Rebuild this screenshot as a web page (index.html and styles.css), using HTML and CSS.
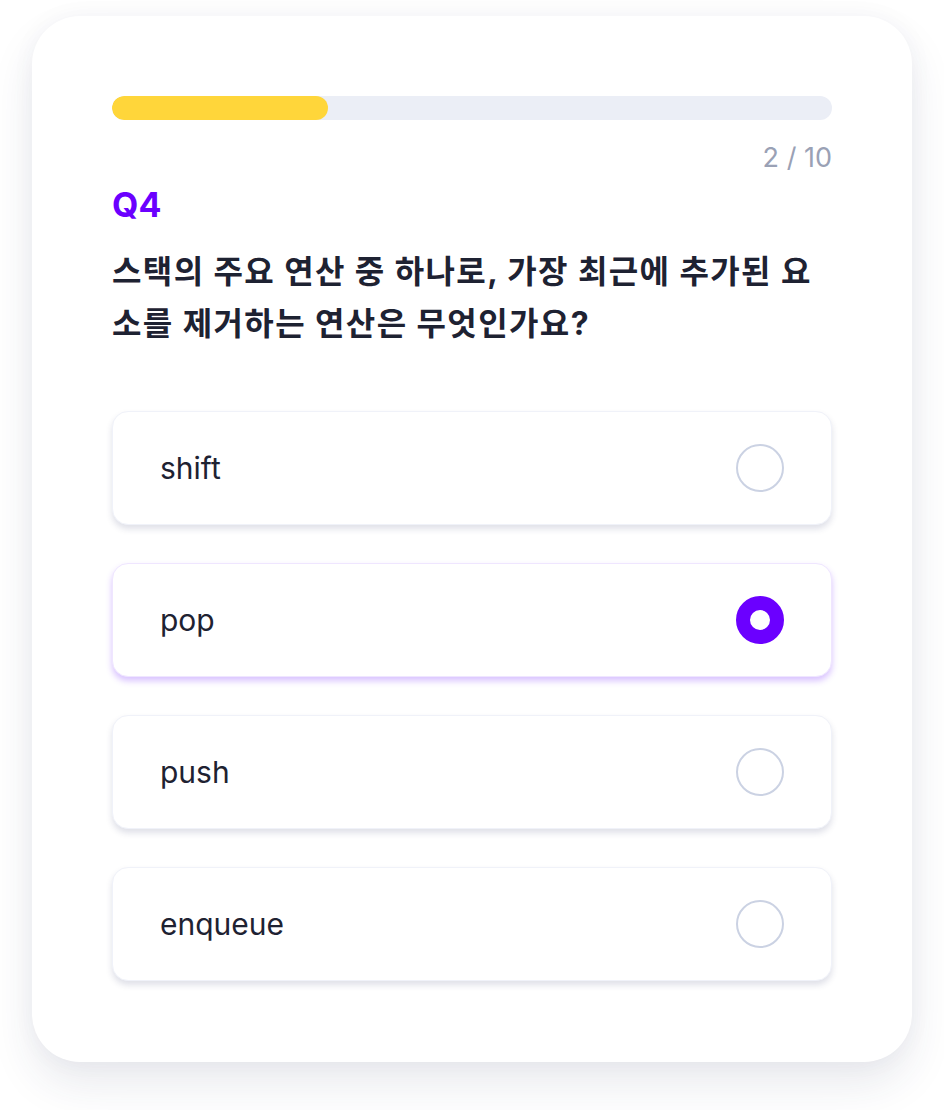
FILE: index.html
```html
<!DOCTYPE html>
<html lang="ko">
<head>
<meta charset="utf-8">
<title>Quiz</title>
<link rel="stylesheet" href="styles.css">
</head>
<body>
<main class="quiz-card">
  <div class="progress"><div class="progress-fill" style="width:30%"></div></div>
  <div class="counter">2 / 10</div>
  <h2 class="q-label">Q4</h2>
  <p class="question">스택의 주요 연산 중 하나로, 가장 최근에 추가된 요소를 제거하는 연산은 무엇인가요?</p>
  <ul class="options">
    <li class="option"><span class="option-text">shift</span><span class="radio"></span></li>
    <li class="option selected"><span class="option-text">pop</span><span class="radio"></span></li>
    <li class="option"><span class="option-text">push</span><span class="radio"></span></li>
    <li class="option"><span class="option-text">enqueue</span><span class="radio"></span></li>
  </ul>
</main>
</body>
</html>
```

FILE: styles.css
```css
* { box-sizing: border-box; }
html, body { margin: 0; padding: 0; background: #ffffff; }
body {
  font-family: Inter, "Noto Sans CJK KR", sans-serif;
  color: #1e2232;
  padding: 16px 32px 48px;
}
.quiz-card {
  width: 880px;
  background: #ffffff;
  border-radius: 48px;
  padding: 80px 80px 81px;
  box-shadow: 0 22px 44px rgba(40, 45, 90, 0.10), 0 0 24px rgba(40, 45, 90, 0.04);
  display: flex;
  flex-direction: column;
}
.progress {
  height: 24px;
  border-radius: 12px;
  background: #ebeef6;
  overflow: hidden;
}
.progress-fill {
  height: 100%;
  background: #ffd63a;
  border-radius: 12px;
}
.counter {
  margin-top: 22px;
  align-self: flex-end;
  font-size: 27px;
  line-height: 32px;
  color: #9aa1b5;
}
.q-label {
  margin: 11px 0 0;
  font-size: 34px;
  line-height: 40px;
  font-weight: 700;
  color: #6b00ff;
}
.question {
  margin: 21px 0 0;
  font-size: 32px;
  letter-spacing: 1.4px;
  line-height: 52px;
  font-weight: 700;
  color: #1e2232;
}
.options {
  list-style: none;
  margin: 61px 0 0;
  padding: 0;
  display: flex;
  flex-direction: column;
  gap: 38px;
}
.option {
  height: 114px;
  border-radius: 16px;
  border: 1px solid #f0f2f9;
  background: #ffffff;
  box-shadow: 0 4px 6px rgba(40, 50, 100, 0.15);
  display: flex;
  align-items: center;
  justify-content: space-between;
  padding: 0 47px;
}
.option-text {
  font-size: 30px;
  color: #1e2232;
}
.radio {
  width: 48px;
  height: 48px;
  border-radius: 50%;
  border: 2px solid #cbd2e3;
  background: #ffffff;
}
.option.selected {
  border-color: #efe6ff;
  box-shadow: 0 4px 6px rgba(120, 40, 255, 0.28);
}
.option.selected .radio {
  border: 14px solid #6b00ff;
}
```
